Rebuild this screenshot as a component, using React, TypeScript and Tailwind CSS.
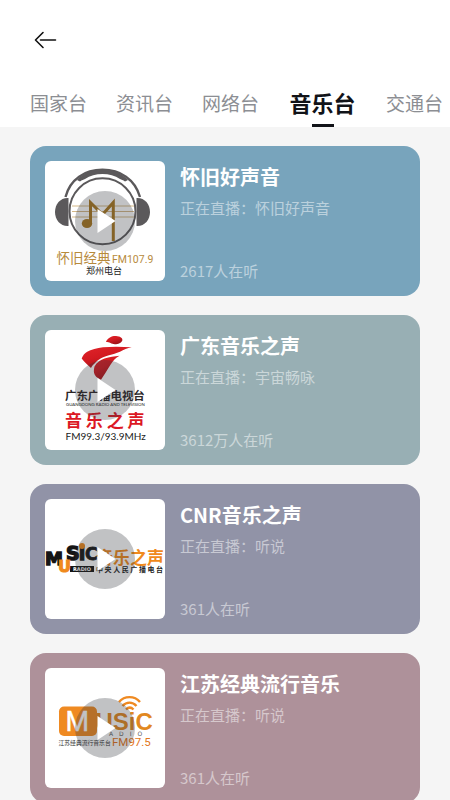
import React from "react";

const cjk = "'Noto Sans CJK SC', sans-serif";

function ClassicLogo() {
  return (
    <svg viewBox="0 0 120 120" className="size-full" aria-hidden="true">
      <g stroke="#c8a468" strokeWidth="0.8">
        <path d="M27 45h62M27 50.500h62M27 56h62" />
      </g>
      <circle cx="57.500" cy="50.300" r="33" fill="none" stroke="#5b595b" strokeWidth="2" />
      <path d="M20.500 36C25 18 40 8.800 57.500 8.800S90 18 95 36" fill="none" stroke="#5b595b" strokeWidth="2.400" />
      <path d="M32 19C39 11.500 48 8.500 57.500 8.500S76 11.500 83 19l-3 1.500c-2-1.500-3.500-1.500-5-2.500C70 14.500 64 13 57.500 13S45 14.500 40 18c-1.500 1-3 1-5 2.500z" fill="#5b595b" />
      <path d="M23.500 37v28c-8 .5-13.500-6-13.500-14s5.500-14.500 13.500-14z" fill="#5b595b" />
      <path d="M91.500 37v28c8 .5 13.500-6 13.500-14s-5.500-14.500-13.500-14z" fill="#5b595b" />
      <path d="M45.500 63V41.500l12 12 10.800-12V80" fill="none" stroke="#a9781f" strokeWidth="3" />
      <ellipse cx="42" cy="62.500" rx="5.200" ry="4.600" fill="#a9781f" />
      <text x="11.500" y="102" fontFamily={cjk} fontSize="13.500" fill="#b78a3c">怀旧经典</text>
      <text x="67" y="102" fontFamily="Roboto, sans-serif" fontSize="10.500" fill="#b78a3c">FM107.9</text>
      <text x="41" y="113" fontFamily={cjk} fontSize="9" fill="#222">郑州电台</text>
    </svg>
  );
}

function GuangdongLogo() {
  return (
    <svg viewBox="0 0 120 120" className="size-full" aria-hidden="true">
      <defs>
        <linearGradient id="figure" x1="0" y1="0" x2="0.600" y2="1">
          <stop offset="0" stopColor="#e0242a" />
          <stop offset="0.500" stopColor="#d31a21" />
          <stop offset="1" stopColor="#9c1218" />
        </linearGradient>
      </defs>
      <path d="M60.800 11.800C63 7.500 67 5.800 71 6c4 .2 7 2 6.300 4.500-.8 2.300-4 3.700-7.500 3.700-3.500 0-5-2.300-9-2.400z" fill="url(#figure)" />
      <path d="M36.700 28.500c1-3 3-5.500 5.500-6.800C46 19.500 52 18 58 17.300c10-1 20-.6 28.700 0C82 18 79 20 75 21.700c-4 1.700-7 2.300-11 3.500-7 2-10 4-13 6.800-2.500 2.300-4 4-5 6-3-3-7.500-6.500-9.300-9.500z" fill="url(#figure)" />
      <path d="M49.500 36.500c2.500-4.500 6-6.500 10-8 5-1.800 10-2 15-2.800-4 2-6.500 5-9 9-3.500 5.500-6.500 10.500-9.500 15-4-1.700-6.500-4-7-7-.3-2 0-4 .5-6.200z" fill="url(#figure)" />
      <text x="20" y="70" fontFamily={cjk} fontSize="11.400" fontWeight="700" fill="#2b2627">广东广播电视台</text>
      <text x="21" y="76" fontFamily="Lato, sans-serif" fontSize="4.300" fill="#222">GUANGDONG RADIO AND TELEVISION</text>
      <text x="20" y="97" fontFamily={cjk} fontSize="17" fontWeight="700" fill="#dc1824">音 乐 之 声</text>
      <text x="20.500" y="109.500" fontFamily="Lato, sans-serif" fontSize="10" fill="#222">FM99.3/93.9MHz</text>
    </svg>
  );
}

function MusicRadioLogo() {
  const heavy = "'DejaVu Sans', sans-serif";
  return (
    <svg viewBox="0 0 120 120" className="size-full" aria-hidden="true">
      <g fontFamily={heavy} fontWeight="700" stroke="#151515" strokeWidth="1.400" fill="#151515">
        <text x="0" y="66" fontSize="18">M</text>
        <text x="21" y="61" fontSize="19">S</text>
        <text x="34" y="61" fontSize="18">i</text>
        <text x="40" y="61" fontSize="17" strokeWidth="0.800">C</text>
      </g>
      <circle cx="37" cy="47" r="3" fill="#f08a1c" />
      <rect x="25" y="67" width="24" height="6" fill="#151515" />
      <text x="28" y="72" fontFamily={heavy} fontSize="5" fontWeight="700" fill="#fff">RADIO</text>
      <text x="13" y="73" fontFamily={heavy} fontSize="16" fontWeight="700" fill="#f08a1c" stroke="#f08a1c" strokeWidth="1">U</text>
      <text x="51" y="65" fontFamily={cjk} fontSize="17" fontWeight="700" fill="#f08a1c">音乐之声</text>
      <text x="51" y="73" fontFamily={cjk} fontSize="7" fontWeight="700" fill="#222">中 央 人 民 广 播 电 台</text>
    </svg>
  );
}

function JiangsuLogo() {
  return (
    <svg viewBox="0 0 120 120" className="size-full" aria-hidden="true">
      <rect x="14" y="38.500" width="38" height="29.500" rx="5" fill="#ef8a22" />
      <text x="20.500" y="62.500" fontFamily="Roboto, sans-serif" fontSize="27" fill="#fff" stroke="#fff" strokeWidth="0.400">M</text>
      <text x="50.500" y="62" fontFamily="'Liberation Sans', sans-serif" fontSize="24" fontWeight="700" fill="#e2881f">USiC</text>
      <g fill="none" stroke="#ef8a22" strokeWidth="2.400">
        <path d="M74 34c5.500-6.500 15.500-6.500 21 0" />
        <path d="M77.500 38c4-4.500 10-4.500 14 0" />
        <path d="M81 41.500c2.500-2.500 5-2.500 7.500 0" />
      </g>
      <text x="64" y="67.500" fontFamily="'DejaVu Sans', sans-serif" fontSize="6" fill="#5d5d60">{"A\u2003D\u2003I\u2003O"}</text>
      <text x="13.500" y="77" fontFamily={cjk} fontSize="5.800" fill="#333">江苏经典流行音乐台</text>
      <text x="67" y="78" fontFamily="Roboto, sans-serif" fontSize="11.500" fill="#e2761c">FM97.5</text>
    </svg>
  );
}

const tabs = ["国家台", "资讯台", "网络台", "音乐台", "交通台"];
const activeTab = "音乐台";

const stations = [
  { name: "怀旧好声音", live: "怀旧好声音", listeners: "2617", color: "bg-[#78a4bc]", Logo: ClassicLogo },
  { name: "广东音乐之声", live: "宇宙畅咏", listeners: "3612万", color: "bg-[#98afb4]", Logo: GuangdongLogo },
  { name: "CNR音乐之声", live: "听说", listeners: "361", color: "bg-[#9193a7]", Logo: MusicRadioLogo },
  { name: "江苏经典流行音乐", live: "听说", listeners: "361", color: "bg-[#ae919a]", Logo: JiangsuLogo },
];

export default function App() {
  return (
    <div className="flex h-screen flex-col overflow-hidden bg-[#f5f5f5] font-['Noto_Sans_CJK_SC',sans-serif]">
      <header className="shrink-0 bg-white">
        <div className="flex h-20 items-center px-[30px]">
          <button type="button" aria-label="返回" className="flex size-8 items-center justify-center">
            <svg viewBox="0 0 32 32" className="size-8" fill="none" stroke="#111" strokeWidth="1.600" strokeLinecap="round" strokeLinejoin="round">
              <path d="M13 8.500L5.500 16l7.500 7.500M10.500 16H25.500" />
            </svg>
          </button>
        </div>
        <nav className="flex gap-[29px] overflow-hidden pl-[30px]">
          {tabs.map((tab) =>
            tab === activeTab ? (
              <button key={tab} type="button" aria-current="page" className="flex w-[69px] shrink-0 flex-col items-center whitespace-nowrap text-[22px] font-bold text-[#111318]">
                <span className="leading-[44px]">{tab}</span>
                <span className="h-[3px] w-[22px] bg-[#111318]" />
              </button>
            ) : (
              <button key={tab} type="button" className="flex shrink-0 flex-col whitespace-nowrap text-[19px] text-[#8c8e93]">
                <span className="leading-[46px]">{tab}</span>
              </button>
            ),
          )}
        </nav>
      </header>
      <main className="flex min-h-0 flex-1 flex-col gap-[19px] overflow-y-auto px-[30px] pt-[19px] [scrollbar-width:none]">
        {stations.map(({ name, live, listeners, color, Logo }) => (
          <article key={name} className={`flex shrink-0 gap-[15px] rounded-2xl p-[15px] ${color}`}>
            <div className="relative size-[120px] shrink-0 overflow-hidden rounded-md bg-white">
              <Logo />
              <button type="button" aria-label={`播放${name}`} className="absolute inset-[30px] rounded-full bg-[#32363a]/30">
                <svg viewBox="0 0 60 60" className="size-full" fill="#fff">
                  <path d="M22.500 18L40.500 30 22.500 42z" />
                </svg>
              </button>
            </div>
            <div className="flex min-w-0 flex-1 flex-col text-[15px] text-white/50">
              <h2 className="text-xl leading-8 font-bold text-white">{name}</h2>
              <p className="leading-[30px]">正在直播：{live}</p>
              <p className="mt-auto leading-5">{listeners}人在听</p>
            </div>
          </article>
        ))}
      </main>
    </div>
  );
}
